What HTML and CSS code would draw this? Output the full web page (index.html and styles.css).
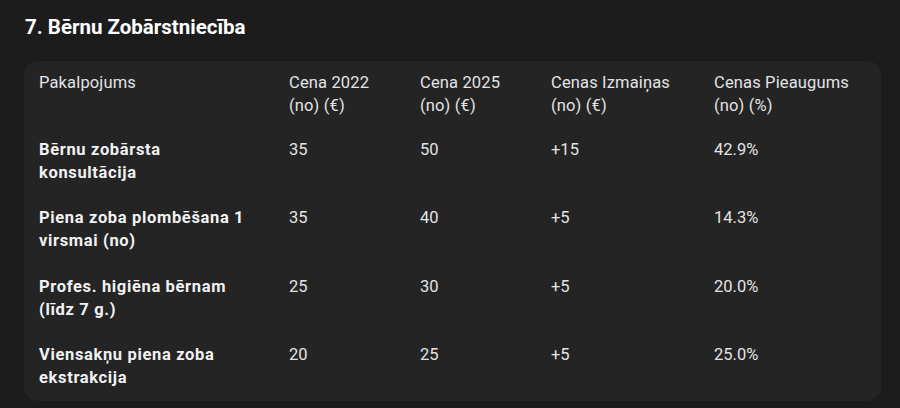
FILE: index.html
```html
<!DOCTYPE html>
<html lang="lv">
<head>
<meta charset="utf-8">
<link rel="stylesheet" href="styles.css">
</head>
<body>
<h2 class="title">7. Bērnu Zobārstniecība</h2>
<div class="card">
<table class="price-table">
<colgroup>
<col class="c1"><col class="c2"><col class="c3"><col class="c4"><col class="c5">
</colgroup>
<thead>
<tr>
<th>Pakalpojums</th>
<th>Cena 2022<br>(no) (€)</th>
<th>Cena 2025<br>(no) (€)</th>
<th>Cenas Izmaiņas<br>(no) (€)</th>
<th>Cenas Pieaugums<br>(no) (%)</th>
</tr>
</thead>
<tbody>
<tr>
<td class="name">Bērnu zobārsta<br>konsultācija</td>
<td>35</td><td>50</td><td>+15</td><td>42.9%</td>
</tr>
<tr>
<td class="name">Piena zoba plombēšana 1<br>virsmai (no)</td>
<td>35</td><td>40</td><td>+5</td><td>14.3%</td>
</tr>
<tr>
<td class="name">Profes. higiēna bērnam<br>(līdz 7 g.)</td>
<td>25</td><td>30</td><td>+5</td><td>20.0%</td>
</tr>
<tr>
<td class="name">Viensakņu piena zoba<br>ekstrakcija</td>
<td>20</td><td>25</td><td>+5</td><td>25.0%</td>
</tr>
</tbody>
</table>
</div>
</body>
</html>
```
FILE: styles.css
```css
html, body {
  margin: 0;
  padding: 0;
  background: #1c1c1d;
}
body {
  font-family: Roboto, "Noto Sans", sans-serif;
  color: #e3e3e3;
  padding: 14px 18px 0 24px;
}
.title {
  margin: 0 0 0 1px;
  font-size: 20.5px;
  line-height: 26px;
  font-weight: 700;
  color: #ffffff;
}
.card {
  margin-top: 21px;
  width: 857px;
  background: #242425;
  border-radius: 14px;
  padding: 0 0 0 15px;
  box-sizing: border-box;
}
.price-table {
  border-collapse: collapse;
  width: 842px;
  table-layout: fixed;
  font-size: 16.5px;
  line-height: 23px;
}
.c1 { width: 250px; }
.c2 { width: 131px; }
.c3 { width: 131px; }
.c4 { width: 163px; }
.price-table th {
  text-align: left;
  font-weight: 400;
  vertical-align: top;
  padding: 10px 0 9.5px;
  color: #e3e3e3;
  letter-spacing: 0.15px;
}
.price-table td {
  vertical-align: top;
  padding: 11px 0 11.5px;
  color: #e3e3e3;
}
.price-table td.name {
  font-weight: 700;
  color: #f2f2f2;
  letter-spacing: 0.65px;
}
```
